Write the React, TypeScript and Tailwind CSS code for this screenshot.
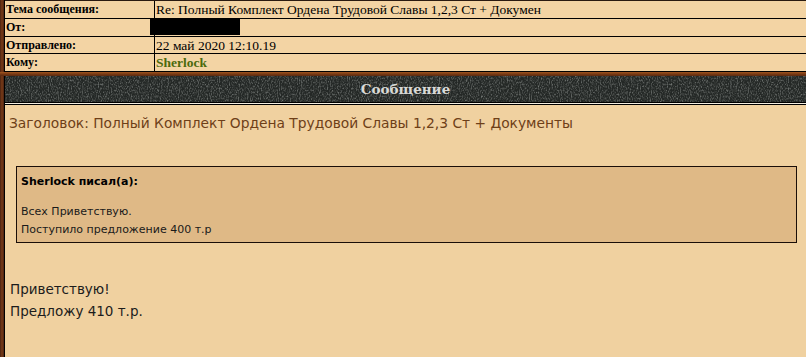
import React from 'react';

const rows = [
  { label: 'Тема сообщения:', value: 'Re: Полный Комплект Ордена Трудовой Славы 1,2,3 Ст + Докумен', h: 18 },
  { label: 'От:', value: '', hidden: true, h: 18 },
  { label: 'Отправлено:', value: '22 май 2020 12:10.19', h: 17 },
  { label: 'Кому:', value: 'Sherlock', author: true, h: 18 },
];

const NoiseBar: React.FC<{ title: string }> = ({ title }) => (
  <div className="relative h-[26px] bg-[#242826] overflow-hidden flex items-center justify-center">
    <svg className="absolute inset-0 w-full h-full" preserveAspectRatio="none">
      <filter id="grain">
        <feTurbulence type="fractalNoise" baseFrequency="0.9 0.5" numOctaves="3" seed="4" />
        <feColorMatrix
          type="matrix"
          values="0 0 0 0 0.52  0 0 0 0 0.55  0 0 0 0 0.53  0 0 0 1.1 -0.48"
        />
      </filter>
      <rect width="100%" height="100%" filter="url(#grain)" />
    </svg>
    <span className="relative text-[13.5px] font-bold text-[#d9d9d6] font-['DejaVu_Serif',serif]">
      {title}
    </span>
  </div>
);

export default function App() {
  return (
    <div className="w-[806px] h-[357px] overflow-hidden flex bg-[#f0d1a0]">
      <div className="w-[4px] shrink-0 bg-gradient-to-r from-[#4a2210] via-[#7a3c18] to-[#4a2210]" />
      <div className="flex-1 flex flex-col border-l border-black">
        <div className="border-t border-[#2a1a10] bg-[#f3d4a4] font-['Liberation_Serif',serif]">
          {rows.map((r, i) => (
            <div key={i} className="flex border-b border-black" style={{ height: r.h }}>
              <div className="w-[150px] shrink-0 border-r border-black pl-[1px] text-[12px] font-bold text-black leading-[17px]">
                {r.label}
              </div>
              <div className="flex-1 pl-[1px] text-[13.5px] leading-[17px] text-black whitespace-nowrap">
                {r.hidden ? (
                  <div className="-ml-[6px] w-[90px] h-[16px] bg-black" />
                ) : r.author ? (
                  <span className="font-bold text-[#4b6a0c]">{r.value}</span>
                ) : (
                  r.value
                )}
              </div>
            </div>
          ))}
        </div>
        <div className="h-[4px] bg-gradient-to-b from-[#a2561f] via-[#7a3a14] to-[#5a2a10] -ml-[5px]" />
        <NoiseBar title="Сообщение" />
        <div className="h-[3px] border-y border-black bg-[#f4eee0]" />
        <div className="flex-1 px-[3px] font-['DejaVu_Sans',sans-serif]">
          <div className="pt-[9px] pl-[1px] text-[13.8px] text-[#6e3f18] leading-[18px]">
            Заголовок: Полный Комплект Ордена Трудовой Славы 1,2,3 Ст + Документы
          </div>
          <div className="mt-[34px] ml-[8px] mr-[6px] h-[77px] border border-[#1a0e08] bg-[#dfb986] px-[4px]">
            <div className="pt-[7px] text-[11px] font-bold text-black leading-[16px]">Sherlock писал(а):</div>
            <div className="mt-[13px] text-[11px] text-[#1a1a1a] leading-[18px]">
              <div>Всех Приветствую.</div>
              <div>Поступило предложение 400 т.р</div>
            </div>
          </div>
          <div className="mt-[35px] pl-[2px] text-[13.5px] text-[#1c1c1c] leading-[22px]">
            <div>Приветствую!</div>
            <div>Предложу 410 т.р.</div>
          </div>
        </div>
      </div>
    </div>
  );
}
